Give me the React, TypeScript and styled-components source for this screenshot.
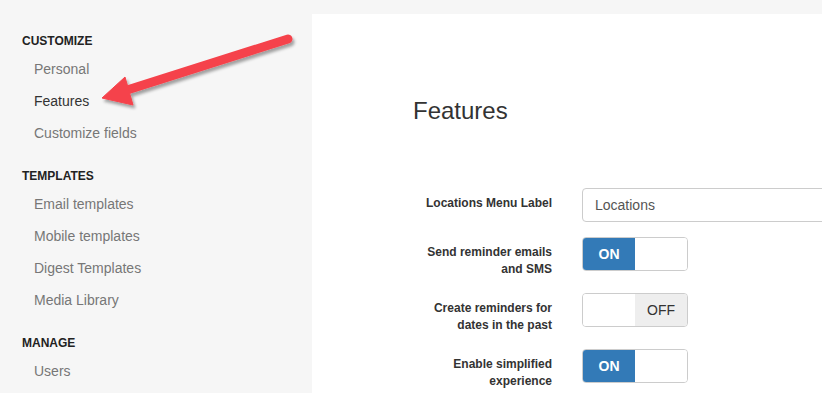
import React from "react";
import styled, { createGlobalStyle } from "styled-components";

const GlobalStyle = createGlobalStyle`
  html, body {
    margin: 0;
    padding: 0;
    background: #f6f6f6;
    font-family: "Liberation Sans", Arial, sans-serif;
    overflow: hidden;
  }
`;

const navGroups = [
  { title: "Customize", items: ["Personal", "Features", "Customize fields"] },
  {
    title: "Templates",
    items: ["Email templates", "Mobile templates", "Digest Templates", "Media Library"],
  },
  { title: "Manage", items: ["Users"] },
];

const App = () => {
  return (
    <Page>
      <GlobalStyle />
      <Sidebar>
        {navGroups.map((group) => (
          <NavGroup key={group.title}>
            <GroupTitle>{group.title}</GroupTitle>
            {group.items.map((item) => (
              <NavItem key={item} $active={item === "Features"}>
                {item}
              </NavItem>
            ))}
          </NavGroup>
        ))}
      </Sidebar>
      <Main>
        <Title>Features</Title>
        <Form>
          <Row>
            <Label>Locations Menu Label</Label>
            <TextInput defaultValue="Locations" />
          </Row>
          <Row>
            <Label>Send reminder emails and SMS</Label>
            <Switch on />
          </Row>
          <Row>
            <Label>Create reminders for dates in the past</Label>
            <Switch on={false} />
          </Row>
          <Row>
            <Label>Enable simplified experience</Label>
            <Switch on />
          </Row>
        </Form>
      </Main>
      <ArrowOverlay width="822" height="393" viewBox="0 0 822 393">
        <defs>
          <filter id="arrowShadow" x="-20%" y="-20%" width="140%" height="160%">
            <feDropShadow dx="2" dy="3" stdDeviation="1.8" floodColor="#000" floodOpacity="0.35" />
          </filter>
        </defs>
        <g filter="url(#arrowShadow)" fill="#f5434b" stroke="#f5434b">
          <line x1="288" y1="39" x2="124" y2="91" strokeWidth="9" strokeLinecap="round" />
          <polygon points="102,98 125,77 133,105" strokeWidth="1" strokeLinejoin="round" />
        </g>
      </ArrowOverlay>
    </Page>
  );
};

const Switch = ({ on }: { on: boolean }) => (
  <SwitchBox>
    {on ? (
      <>
        <SwitchHalf $kind="on">ON</SwitchHalf>
        <SwitchHalf $kind="blank" />
      </>
    ) : (
      <>
        <SwitchHalf $kind="blank" />
        <SwitchHalf $kind="off">OFF</SwitchHalf>
      </>
    )}
  </SwitchBox>
);

export default App;

const Page = styled.div`
  position: relative;
  display: flex;
  width: 822px;
  height: 393px;
  overflow: hidden;
`;

const Sidebar = styled.nav`
  width: 312px;
  flex-shrink: 0;
  padding: 31px 0 0 22px;
  box-sizing: border-box;
`;

const NavGroup = styled.div`
  margin-bottom: 17px;
`;

const GroupTitle = styled.div`
  font-size: 12px;
  font-weight: bold;
  line-height: 20px;
  text-transform: uppercase;
  color: #222;
  margin-bottom: 2px;
`;

const NavItem = styled.div<{ $active?: boolean }>`
  font-size: 14px;
  line-height: 32px;
  padding-left: 12px;
  color: ${(p) => (p.$active ? "#333" : "#777")};
`;

const Main = styled.main`
  flex: 1;
  margin-top: 14px;
  background: #fff;
  padding: 84px 0 0 101px;
  box-sizing: border-box;
`;

const Title = styled.h1`
  margin: 0;
  font-size: 24px;
  font-weight: normal;
  line-height: 26px;
  color: #333;
`;

const Form = styled.div`
  margin-top: 64px;
`;

const Row = styled.div`
  display: grid;
  grid-template-columns: 139px 1fr;
  column-gap: 30px;
  align-items: start;
  margin-bottom: 15px;
`;

const Label = styled.label`
  padding-top: 7px;
  font-size: 12px;
  font-weight: bold;
  line-height: 17px;
  color: #333;
  text-align: right;
`;

const TextInput = styled.input`
  width: 400px;
  height: 34px;
  box-sizing: border-box;
  padding: 6px 12px;
  border: 1px solid #ccc;
  border-radius: 4px;
  font-family: inherit;
  font-size: 14px;
  color: #555;
  outline: none;
`;

const SwitchBox = styled.div`
  display: flex;
  width: 106px;
  height: 34px;
  box-sizing: border-box;
  border: 1px solid #ccc;
  border-radius: 4px;
  overflow: hidden;
`;

const SwitchHalf = styled.span<{ $kind: "on" | "off" | "blank" }>`
  width: 52px;
  display: flex;
  align-items: center;
  justify-content: center;
  font-size: 14px;
  font-weight: ${(p) => (p.$kind === "on" ? "bold" : "normal")};
  background: ${(p) =>
    p.$kind === "on" ? "#337ab7" : p.$kind === "off" ? "#eeeeee" : "#fff"};
  color: ${(p) => (p.$kind === "on" ? "#fff" : "#333")};
  &:last-child {
    flex: 1;
  }
`;

const ArrowOverlay = styled.svg`
  position: absolute;
  left: 0;
  top: 0;
  pointer-events: none;
`;
